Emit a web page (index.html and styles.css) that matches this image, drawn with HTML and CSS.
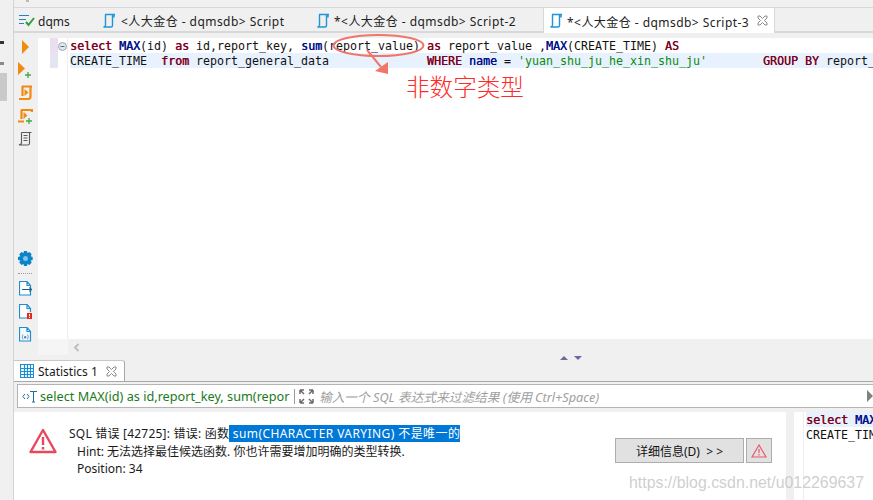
FILE: index.html
```html
<!DOCTYPE html>
<html lang="zh">
<head>
<meta charset="utf-8">
<title>DBeaver</title>
<link rel="stylesheet" href="styles.css">
</head>
<body>
<div class="app">
  <aside class="strip">
    <div class="strip-chev"></div>
    <div class="strip-arrow"></div>
    <div class="strip-block"></div>
  </aside>
  <main class="main">
    <nav class="tabbar">
      <div class="tab tab-first">
        <svg class="ic" width="16" height="14" viewBox="0 0 16 14"><path d="M0 2.500h10M0 6.500h7M0 10.500h5" stroke="#2a7fc0" fill="none"/><path d="M7 9l2.500 3L15 5" stroke="#2e9e3c" stroke-width="2" fill="none"/></svg>
        <span>dqms</span>
      </div>
      <div class="tab tab-second">
        <svg class="ic" width="14" height="15" viewBox="0 0 14 15"><path d="M3 1.500h10M3.500 1.500v11M10.500 1.500v11q0 1.500-1.500 1.500H1.500q1.500-.5 2-1.500M12 1.500v3" stroke="#1f95d8" stroke-width="1.400" fill="none"/></svg>
        <span>&lt;人大金仓 - dqmsdb&gt; Script</span>
      </div>
      <div class="tab tab-third">
        <svg class="ic" width="14" height="15" viewBox="0 0 14 15"><path d="M3 1.500h10M3.500 1.500v11M10.500 1.500v11q0 1.500-1.500 1.500H1.500q1.500-.5 2-1.500M12 1.500v3" stroke="#1f95d8" stroke-width="1.400" fill="none"/></svg>
        <span>*&lt;人大金仓 - dqmsdb&gt; Script-2</span>
      </div>
      <div class="tab tab-active">
        <svg class="ic" width="14" height="15" viewBox="0 0 14 15"><path d="M3 1.500h10M3.500 1.500v11M10.500 1.500v11q0 1.500-1.500 1.500H1.500q1.500-.5 2-1.500M12 1.500v3" stroke="#1f95d8" stroke-width="1.400" fill="none"/></svg>
        <span>*&lt;人大金仓 - dqmsdb&gt; Script-3</span>
        <svg class="close" width="11" height="11" viewBox="0 0 11 11"><path d="M1 1h2l2.500 2.500L8 1h2v2L7.500 5.500 10 8v2H8L5.500 7.500 3 10H1V8l2.500-2.500L1 3z" fill="#fff" stroke="#8a8a8a"/></svg>
      </div>
    </nav>
    <section class="workspace">
      <div class="toolbar">
        <div class="tool"><svg width="14" height="16" viewBox="0 0 14 16"><path d="M4 1l7 7-7 7z" fill="#f08a10"/></svg></div>
        <div class="tool"><svg width="16" height="18" viewBox="0 0 16 18"><path d="M1 1l7 6.500L1 14z" fill="#f08a10"/><path d="M11 11v6M8 14h6" stroke="#45a845" stroke-width="1.300"/></svg></div>
        <div class="tool"><svg width="15" height="16" viewBox="0 0 15 16"><path d="M4 1.500h10M4.500 1v10M12.500 1.500V11q0 3-2 3H1" stroke="#f08a10" stroke-width="2.200" fill="none"/><path d="M6.500 4l4 3.500-4 3.500z" fill="#f08a10"/></svg></div>
        <div class="tool"><svg width="15" height="16" viewBox="0 0 15 16"><path d="M3 2h8M3.500 2v9M0 13.500h6M11 2h3v2" stroke="#f08a10" stroke-width="2.200" fill="none"/><path d="M5.500 4l4 3.500-4 3.500z" fill="#f08a10"/><path d="M11 10v6M8 13h6" stroke="#45a845" stroke-width="1.300"/></svg></div>
        <div class="tool"><svg width="14" height="16" viewBox="0 0 14 16"><path d="M3.500 1.500h10M3.500 1.500v11M11.500 1.500v11q0 1.500-2 1.500H1q1.500-.5 2.500-1.500M5.500 4.500h4M5.500 7h4M5.500 9.500h4" stroke="#5a5a5a" stroke-width="1.100" fill="none"/></svg></div>
        <div class="toolbar-gap"></div>
        <div class="tool"><svg width="15" height="15" viewBox="0 0 15 15"><path d="M6 0h3l.5 2 2-1 2.200 2.200-1 2 2 .8v3l-2 .5 1 2L11.500 14l-2-1-.5 2H6l-.5-2-2 1-2.200-2.500 1-2L0 9V6l2.300-.8-1-2L3.500 1l2 1z" fill="#0a84c8"/><circle cx="7.500" cy="7.500" r="2.500" fill="#7fc4ea"/></svg></div>
        <div class="dots"></div>
        <div class="tool"><svg width="13" height="15" viewBox="0 0 13 15"><path d="M8 .500H.500v13.500h11V4.500zM8 .500v4h3.500" stroke="#1f8ed0" stroke-width="1.200" fill="#fff"/><path d="M3 8.500h9.500M10.500 6.500l2 2-2 2" stroke="#17608c" stroke-width="1.200" fill="none"/></svg></div>
        <div class="tool"><svg width="13" height="15" viewBox="0 0 13 15"><path d="M8 .500H.500v13.500h8M11.500 8V4.500L8 .500v4h3.500" stroke="#1f8ed0" stroke-width="1.200" fill="#fff"/><rect x="8" y="9" width="5" height="6" fill="#e8281c"/><path d="M10.500 10v2.300M10.500 13v1" stroke="#fff"/></svg></div>
        <div class="tool"><svg width="13" height="15" viewBox="0 0 13 15"><path d="M8 .500H.500v13.500h11V4.500zM8 .500v4h3.500" stroke="#1f8ed0" stroke-width="1.200" fill="#f4f9fd"/><path d="M4 7.500q-1.500 2.500 0 5M8.500 7.500q1.500 2.500 0 5" stroke="#7c9cc0" fill="none"/><rect x="5.200" y="9.300" width="2" height="2" fill="#356fa8"/></svg></div>
      </div>
      <div class="editor">
        <div class="ruler">
          <div class="marks">
            <span class="mark-a"></span>
            <span class="mark-b"></span>
          </div>
          <svg class="fold" width="9" height="9" viewBox="0 0 9 9"><circle cx="4.500" cy="4.500" r="4" fill="#dfe7ef" stroke="#9aa8b8"/><path d="M2.500 4.500h4" stroke="#5c6a7a"/></svg>
        </div>
        <div class="code">
          <div class="line"><b class="kw">select</b> <b class="fn">MAX</b>(id) <b class="kw">as</b> id,report_key, <b class="fn">sum</b>(report_value) <b class="kw">as</b> report_value ,<b class="fn">MAX</b>(CREATE_TIME) <b class="kw">AS</b></div>
          <div class="line line-cur">CREATE_TIME  <b class="kw">from</b> report_general_data              <b class="kw">WHERE</b> <b class="fn">name</b> = <span class="str">'yuan_shu_ju_he_xin_shu_ju'</span>        <b class="kw">GROUP BY</b> report_key</div>
        </div>
      </div>
    </section>
    <div class="scrollrow">
      <div class="scroll-gutter"></div>
      <div class="scroll-ruler"></div>
      <svg class="scroll-left" width="7" height="9" viewBox="0 0 7 9"><path d="M5.500 1l-3.500 3.500 3.500 3.500" stroke="#c0c0c0" stroke-width="2" fill="none"/></svg>
    </div>
    <div class="sash">
      <div class="panel-tab">
        <svg class="ic" width="14" height="14" viewBox="0 0 14 14"><path d="M.500.500h13v13H.500zM.500 4.500h13M.500 7.500h13M.500 10.500h13M4.500.500v13M7.500.500v13M10.500.500v13" stroke="#1f8ed0" stroke-width="1.200" fill="none"/></svg>
        <span>Statistics 1</span>
        <svg class="close" width="11" height="11" viewBox="0 0 11 11"><path d="M1 1h2l2.500 2.500L8 1h2v2L7.500 5.500 10 8v2H8L5.500 7.500 3 10H1V8l2.500-2.500L1 3z" fill="#fff" stroke="#8a8a8a"/></svg>
      </div>
      <div class="sash-arrows"><i class="tri-up"></i><i class="tri-down"></i></div>
    </div>
    <div class="filter">
      <svg class="filter-t" width="16" height="13" viewBox="0 0 16 13"><path d="M3 4L.800 6.500 3 9M5 4l2 2.500L5 9" stroke="#1f6e9e" fill="none"/><path d="M8 1.500h7M11.500 1.500V12M10 12h3" stroke="#1f6e9e" fill="none"/></svg>
      <span class="filter-sql">select MAX(id) as id,report_key, sum(repor</span>
      <i class="filter-sep"></i>
      <svg class="filter-exp" width="15" height="15" viewBox="0 0 15 15"><path d="M1 1l4 4M1 1v4M1 1h4M14 1l-4 4M14 1v4M14 1h-4M1 14l4-4M1 14v-4M1 14h4M14 14l-4-4M14 14v-4M14 14h-4" stroke="#6a6a6a" stroke-width="1.500" fill="none"/></svg>
      <span class="filter-ph">输入一个 SQL 表达式来过滤结果 (使用 Ctrl+Space)</span>
      <i class="filter-go"></i>
    </div>
    <section class="results">
      <div class="error">
        <svg class="err-ic" width="28" height="26" viewBox="0 0 28 26"><path d="M14 2L1.500 24h25z" fill="#fff" stroke="#e8485c" stroke-width="2.400" stroke-linejoin="round"/><path d="M14 9v8M14 19v2.500" stroke="#e8485c" stroke-width="2.400"/></svg>
        <div class="err-text">
          <div class="err-l1">SQL 错误 [42725]: 错误: 函数<span class="sel"> sum(CHARACTER VARYING) 不是唯一的</span></div>
          <div class="err-l2">Hint: 无法选择最佳候选函数. 你也许需要增加明确的类型转换.</div>
          <div class="err-l2">Position: 34</div>
        </div>
        <div class="err-btns">
          <button class="btn btn-detail" type="button">详细信息(D)  &gt; &gt;</button>
          <button class="btn btn-warn" type="button"><svg width="16" height="14" viewBox="0 0 16 14"><path d="M8 1L1 13h14z" fill="none" stroke="#e8586c" stroke-width="1.200"/><path d="M8 5v4M8 10v1.500" stroke="#e8586c" stroke-width="1.200"/></svg></button>
        </div>
      </div>
      <div class="sqlview">
        <div class="line line-cur"><b class="kw">select</b> <b class="fn">MAX</b></div>
        <div class="line">CREATE_TIM</div>
      </div>
    </section>
  </main>
</div>
<div class="top-mark"></div>
<svg class="anno" width="873" height="500" viewBox="0 0 873 500">
  <ellipse cx="378.500" cy="45.500" rx="45" ry="10.500" fill="none" stroke="#f0766c" stroke-width="2"/>
  <path d="M367 50l14 17" stroke="#f0766c" stroke-width="2"/>
  <path d="M388 74l-13-3 13-9z" fill="#f0766c"/>
</svg>
<div class="anno-text">非数字类型</div>
<div class="watermark">https://blog.csdn.net/u012269637</div>
</body>
</html>
```
FILE: styles.css
```css
* { box-sizing: border-box; }
html, body { margin: 0; padding: 0; }
body {
  width: 873px; height: 500px; overflow: hidden; position: relative;
  background: #f0f0f0; color: #1a1a1a;
  font: 12px "Noto Sans", "Noto Sans CJK SC", sans-serif;
}
.app { display: flex; height: 500px; }
.strip { width: 14px; flex: none; border-right: 1px solid #d4d4d4; padding-top: 41px; }
.strip-chev { width: 4px; height: 3px; background: #333; margin-bottom: 18px; }
.strip-arrow { width: 4px; height: 3px; background: #8a8a8a; margin-bottom: 8px; }
.strip-block { width: 7px; height: 28px; background: #c9c9c9; }
.main { flex: 1; min-width: 0; display: flex; flex-direction: column; padding-top: 7px; }
.tabbar { display: flex; height: 26px; flex: none; border-top: 1px solid #d8d8d8; border-bottom: 2px solid #d8d8d8; }
.tab { display: flex; align-items: center; height: 24px; white-space: nowrap; color: #222; }
.tab span { padding-top: 2px; letter-spacing: .45px; }
.tab-first { padding-left: 5px; width: 87px; }
.tab-first .ic { margin-right: 3px; }
.tab-first span { letter-spacing: 0; }
.tab-second { width: 215px; padding-left: 1px; }
.tab-second .ic { margin-right: 5px; }
.tab-third { width: 227px; padding-left: 0; }
.tab-third .ic { margin-right: 4px; }
.tab-active { width: 232px; padding-left: 5px; background: #fff; border-left: 1px solid #d8d8d8; border-right: 1px solid #d8d8d8; height: 25px; }
.tab-active .ic { margin-right: 4px; }
.tab-active .close { margin-left: 8px; }
.workspace { display: flex; height: 306px; flex: none; }
.toolbar { width: 24px; flex: none; display: flex; flex-direction: column; align-items: center; padding-top: 2px; padding-right: 2px; }
.tool { height: 23px; flex: none; display: flex; align-items: center; justify-content: center; }
.toolbar-gap { height: 97px; flex: none; }
.dots { width: 14px; height: 4px; flex: none; border-top: 1px dotted #999; margin-top: 3px; }
.editor { flex: 1; min-width: 0; display: flex; background: #fff; overflow: hidden; margin-top: 5px; }
.ruler { width: 30px; flex: none; border-right: 1px solid #eeeeee; display: flex; align-items: flex-start; padding-left: 12px; }
.marks { width: 8px; display: flex; flex-direction: column; }
.mark-a { height: 15px; background: #eadff0; }
.mark-b { height: 15px; background: #e4e4f2; }
.fold { margin-top: 4px; }
.code { flex: 1; min-width: 0; padding-left: 2px; overflow: hidden; }
.line {
  height: 15px; line-height: 17px; white-space: pre; color: #111;
  font-family: "DejaVu Sans Mono", monospace; font-size: 11.63px;
}
.line-cur { background: #e8f2fe; }
.kw { font-weight: 400; color: #7f0020; text-shadow: .4px 0 0 #7f0020; }
.fn { font-weight: 400; color: #00108a; text-shadow: .4px 0 0 #00108a; }
.str { color: #0a8a0a; }
.scrollrow { display: flex; align-items: center; height: 16px; flex: none; }
.scroll-gutter { width: 24px; }
.scroll-ruler { width: 30px; height: 16px; background: #f5f5f5; }
.scroll-left { margin-left: 5px; }
.sash { position: relative; height: 27px; flex: none; border-bottom: 1px solid #a8a8a8; padding-top: 5px; }
.panel-tab {
  display: flex; align-items: center; width: 111px; height: 21px; background: #fff;
  border-right: 1px solid #a8a8a8; border-top: 1px solid #c8c8c8; border-top-right-radius: 3px;
  padding-left: 6px;
}
.panel-tab .ic { margin-right: 4px; flex: none; }
.panel-tab .close { margin-left: 8px; flex: none; }
.sash-arrows { position: absolute; left: 546px; top: 1px; display: flex; gap: 6px; }
.tri-up { width: 0; height: 0; border: 4px solid transparent; border-top: 0; border-bottom: 4px solid #6a6a9e; }
.tri-down { width: 0; height: 0; border: 4px solid transparent; border-bottom: 0; border-top: 4px solid #6a6a9e; }
.filter {
  display: flex; align-items: center; height: 24px; flex: none; margin: 2px 0 4px 3px;
  background: #fff; border: 1px solid #b4b4b4; border-right: 0;
  padding-left: 4px; white-space: nowrap; font-size: 12.7px;
}
.filter-t { flex: none; margin-right: 2px; }
.filter-sql { width: 254px; overflow: hidden; color: #1a7a1a; flex: none; }
.filter-sep { width: 1px; height: 15px; background: #999; flex: none; margin-right: 4px; }
.filter-exp { flex: none; margin-right: 5px; }
.filter-ph { font-style: italic; color: #a0a0a0; flex: 1; min-width: 0; }
.filter-go { width: 0; height: 0; flex: none; border: 6px solid transparent; border-right: 0; border-left: 6px solid #808080; }
.results { flex: 1; min-height: 0; display: flex; }
.error { width: 772px; flex: none; background: #fff; display: flex; align-items: flex-start; position: relative; padding: 13px 0 0 15px; }
.err-ic { flex: none; margin-top: 3px; margin-right: 12px; }
.err-text { flex: 1; white-space: nowrap; }
.err-l1 { height: 17px; line-height: 17px; letter-spacing: .22px; margin-bottom: 1px; }
.sel { background: #0078d7; color: #fff; display: inline-block; height: 17px; white-space: pre; letter-spacing: .42px; }
.err-l2 { padding-left: 8px; height: 17px; line-height: 17px; }
.err-btns { position: absolute; left: 601px; top: 26px; display: flex; gap: 2px; }
.btn { height: 25px; background: #e1e1e1; border: 1px solid #adadad; font: inherit; color: #111; padding: 0; white-space: pre; }
.btn-detail { width: 129px; }
.btn-warn { width: 26px; display: flex; align-items: center; justify-content: center; }
.sqlview { flex: 1; min-width: 0; overflow: hidden; margin-left: 8px; background: #fff; padding-left: 12px; position: relative; }
.sqlview::before { content: ""; position: absolute; left: 9px; top: 0; bottom: 0; border-left: 1px solid #eee; }
.top-mark { position: absolute; left: 26px; top: 0; width: 3px; height: 2px; background: #c8b8a0; }
.anno { position: absolute; left: 0; top: 0; pointer-events: none; }
.anno-text { position: absolute; left: 406px; top: 68px; font: 200 23.6px/36px "Noto Sans CJK SC", sans-serif; color: #ff2a2a; }
.watermark { position: absolute; left: 629px; top: 472px; font: 15.9px/22px "Liberation Sans", sans-serif; color: rgba(190,190,190,.75); }
```
